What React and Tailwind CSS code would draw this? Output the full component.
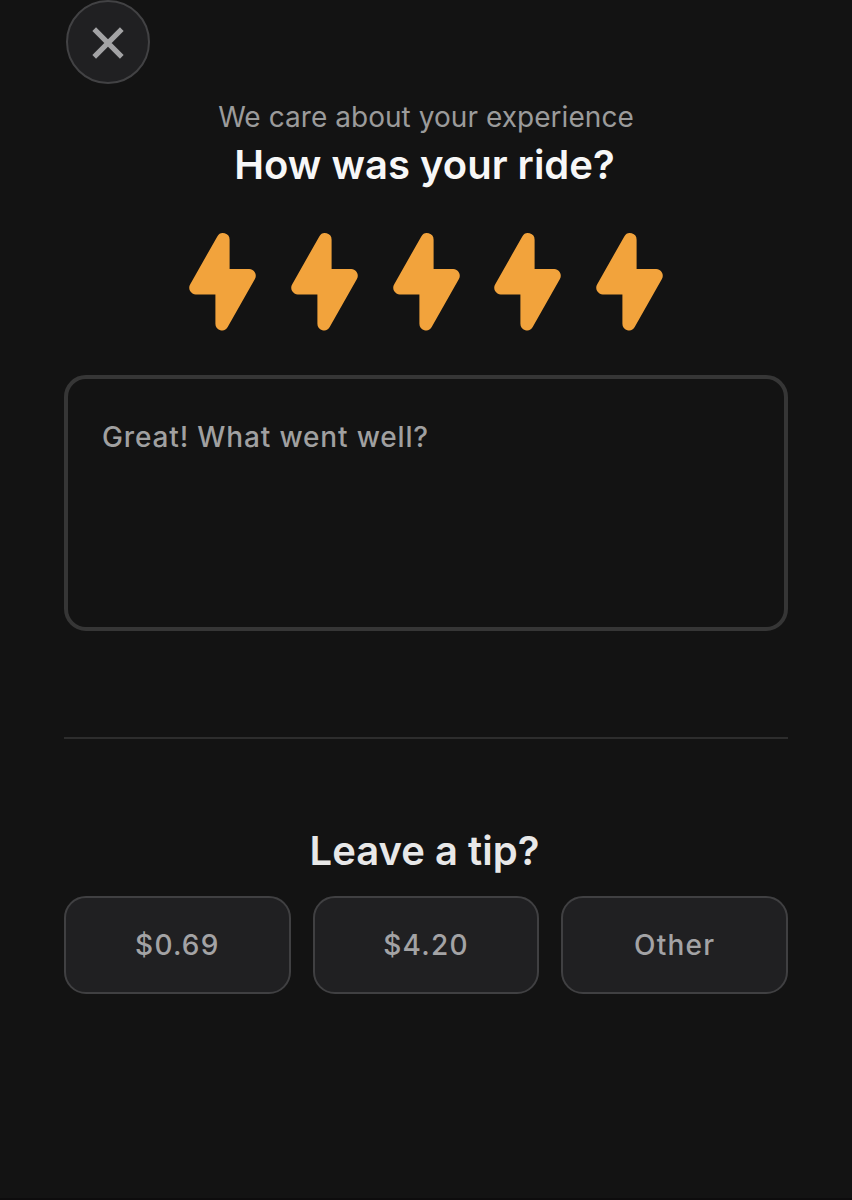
import { useState } from "react";

const BOLTS = [1, 2, 3, 4, 5];
const TIPS = ["$0.69", "$4.20", "Other"];

function Bolt() {
  return (
    <svg viewBox="0 0 67 97.5" className="h-[97.5px] w-[67px]" fill="currentColor" aria-hidden="true">
      <path d="M1.1 51.5 28.3 3.4A6.6 6.6 0 0 1 40.6 6.7V36.1H60.2A6.6 6.6 0 0 1 65.9 46L38.7 94.1A6.6 6.6 0 0 1 26.4 90.8V61.4H6.8A6.6 6.6 0 0 1 1.1 51.5Z" />
    </svg>
  );
}

function App() {
  const [rating, setRating] = useState(5);
  const [tip, setTip] = useState(null);

  return (
    <main className="flex h-[1200px] w-[852px] flex-col border-b-2 border-[#0d0c0d] bg-[#131313] px-16 font-['Inter',sans-serif]">
      <button
        type="button"
        aria-label="Close"
        className="ml-0.5 flex h-[84px] w-[84px] shrink-0 items-center justify-center rounded-full border-2 border-[#424244] bg-[#202022] text-[#a3a3a5]"
      >
        <svg viewBox="0 0 32 32" className="mt-0.5 h-8 w-8" fill="none" stroke="currentColor" strokeWidth="5.2">
          <path d="M2.2 2.2 29.8 29.8M29.8 2.2 2.2 29.8" />
        </svg>
      </button>

      <header className="mt-[15px] text-center">
        <p className="text-[28px] leading-9 tracking-[0.05px] text-[#9b9b9b]">We care about your experience</p>
        <h1 className="mt-[5px] mr-[3px] text-[40px] leading-[50px] font-semibold text-[#f7f7f7]">How was your ride?</h1>
      </header>

      <div className="mt-[43px] flex justify-center gap-[34.8px]">
        {BOLTS.map((n) => (
          <button
            key={n}
            type="button"
            aria-label={`Rate ${n} of 5`}
            onClick={() => setRating(n)}
            className={n <= rating ? "text-[#f2a33c]" : "text-[#424244]"}
          >
            <Bolt />
          </button>
        ))}
      </div>

      <textarea
        aria-label="Feedback"
        placeholder="Great! What went well?"
        className="mt-[44.5px] h-64 w-full shrink-0 resize-none rounded-[22px] border-4 border-[#363636] bg-transparent px-[34px] py-10 text-[28px] leading-9 font-medium tracking-[0.85px] text-[#f7f7f7] outline-none placeholder:text-[#a0a0a0]"
      />

      <hr className="mt-[106px] border-t-2 border-[#2d2d2d]" />

      <section className="mt-[87px]">
        <h2 className="mr-[3px] text-center text-[40px] leading-[50px] font-semibold text-[#e8e8e8]">Leave a tip?</h2>
        <div className="mt-5 grid grid-cols-3 gap-[22px]">
          {TIPS.map((label) => (
            <button
              key={label}
              type="button"
              aria-pressed={tip === label}
              onClick={() => setTip(label)}
              className="h-[98px] rounded-[22px] border-2 border-[#404042] bg-[#202022] text-[28px] font-medium tracking-[1.2px] text-[#a3a3a5]"
            >
              {label}
            </button>
          ))}
        </div>
      </section>
    </main>
  );
}

export default App;
